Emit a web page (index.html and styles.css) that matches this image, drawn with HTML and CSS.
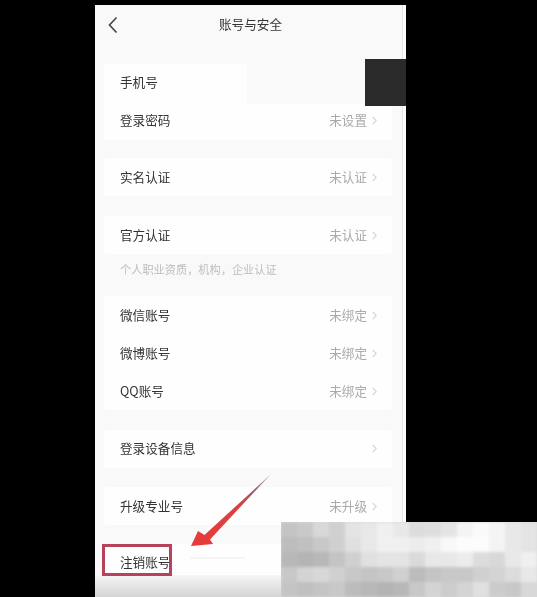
FILE: index.html
```html
<!DOCTYPE html>
<html>
<head>
    <meta charset="utf-8">
    <title>账号与安全</title>
    <link rel="stylesheet" href="styles.css">
</head>
<body>
    <div class="phone">
        <div class="header">
            <svg class="back" width="12" height="18" viewBox="0 0 12 18"><path d="M9.500 1.500L2.500 9l7 7.500" fill="none" stroke="#444" stroke-width="1.600"/></svg>
            <h1 class="title">账号与安全</h1>
        </div>

        <div class="card card-top">
            <div class="row"><span>手机号</span></div>
            <div class="row"><span>登录密码</span><span class="value">未设置<svg class="chevron" width="5" height="9" viewBox="0 0 5 9"><path d="M.7.8l3.500 3.700-3.500 3.700" fill="none" stroke="#d4d4d4" stroke-width="1.100"/></svg></span></div>
        </div>

        <div class="card">
            <div class="row"><span>实名认证</span><span class="value">未认证<svg class="chevron" width="5" height="9" viewBox="0 0 5 9"><path d="M.7.8l3.500 3.700-3.500 3.700" fill="none" stroke="#d4d4d4" stroke-width="1.100"/></svg></span></div>
        </div>

        <div class="card card-official">
            <div class="row"><span>官方认证</span><span class="value">未认证<svg class="chevron" width="5" height="9" viewBox="0 0 5 9"><path d="M.7.8l3.500 3.700-3.500 3.700" fill="none" stroke="#d4d4d4" stroke-width="1.100"/></svg></span></div>
        </div>
        <p class="hint">个人职业资质，机构，企业认证</p>

        <div class="card">
            <div class="row"><span>微信账号</span><span class="value">未绑定<svg class="chevron" width="5" height="9" viewBox="0 0 5 9"><path d="M.7.8l3.500 3.700-3.500 3.700" fill="none" stroke="#d4d4d4" stroke-width="1.100"/></svg></span></div>
            <div class="row"><span>微博账号</span><span class="value">未绑定<svg class="chevron" width="5" height="9" viewBox="0 0 5 9"><path d="M.7.8l3.500 3.700-3.500 3.700" fill="none" stroke="#d4d4d4" stroke-width="1.100"/></svg></span></div>
            <div class="row"><span>QQ账号</span><span class="value">未绑定<svg class="chevron" width="5" height="9" viewBox="0 0 5 9"><path d="M.7.8l3.500 3.700-3.500 3.700" fill="none" stroke="#d4d4d4" stroke-width="1.100"/></svg></span></div>
        </div>

        <div class="card card-device">
            <div class="row"><span>登录设备信息</span><span class="value"><svg class="chevron" width="5" height="9" viewBox="0 0 5 9"><path d="M.7.8l3.500 3.700-3.500 3.700" fill="none" stroke="#d4d4d4" stroke-width="1.100"/></svg></span></div>
        </div>

        <div class="card card-upgrade">
            <div class="row"><span>升级专业号</span><span class="value">未升级<svg class="chevron" width="5" height="9" viewBox="0 0 5 9"><path d="M.7.8l3.500 3.700-3.500 3.700" fill="none" stroke="#d4d4d4" stroke-width="1.100"/></svg></span></div>
        </div>

        <div class="card card-cancel">
            <div class="row"><span>注销账号</span></div>
        </div>

        <!-- things painted over the screenshot -->
        <div class="mask-light"></div>
        <div class="mask-dark"></div>
        <div class="bottom-shade"></div>
        <svg class="marks" width="311" height="592" viewBox="0 0 311 592">
            <defs>
                <linearGradient id="arrow-fill" gradientUnits="userSpaceOnUse" x1="96" y1="541" x2="176" y2="469">
                    <stop offset="0" stop-color="#e93a3a"/>
                    <stop offset="0.55" stop-color="#dc4040"/>
                    <stop offset="0.8" stop-color="#94606a"/>
                    <stop offset="1" stop-color="#b8b0b2"/>
                </linearGradient>
            </defs>
            <path d="M95 553h55" stroke="#ececec" stroke-width="1"/>
            <rect x="8.500" y="540.500" width="67" height="29" fill="none" stroke="#b5445a" stroke-width="3"/>
            <path d="M96 541L103 526L109.500 530L176 469L115 534.500L118 539Z" fill="url(#arrow-fill)"/>
        </svg>
    </div>

    <svg class="mosaic" width="256" height="75" viewBox="0 0 256 75">
        <rect width="256" height="75" fill="#d8d8d8"/>
        <g class="cells">
            <rect x="0" y="0" width="16" height="15" fill="#c4c4c4"/><rect x="16" y="0" width="16" height="15" fill="#c9c9c9"/><rect x="32" y="0" width="16" height="15" fill="#d8d8d8"/><rect x="48" y="0" width="16" height="15" fill="#d0d0d0"/><rect x="64" y="0" width="16" height="15" fill="#e4e4e4"/><rect x="80" y="0" width="16" height="15" fill="#e8e8e8"/><rect x="96" y="0" width="16" height="15" fill="#f0f0f0"/><rect x="112" y="0" width="16" height="15" fill="#e8e8e8"/>
            <rect x="128" y="0" width="16" height="15" fill="#dcdcdc"/><rect x="144" y="0" width="16" height="15" fill="#dedede"/><rect x="160" y="0" width="16" height="15" fill="#e4e4e4"/><rect x="176" y="0" width="16" height="15" fill="#f4f4f4"/><rect x="192" y="0" width="16" height="15" fill="#fafafa"/><rect x="208" y="0" width="16" height="15" fill="#f4f4f4"/><rect x="224" y="0" width="16" height="15" fill="#e8e8e8"/><rect x="240" y="0" width="16" height="15" fill="#e4e4e4"/>
            <rect x="0" y="15" width="16" height="15" fill="#bdbdbd"/><rect x="16" y="15" width="16" height="15" fill="#c0c0c0"/><rect x="32" y="15" width="16" height="15" fill="#c8c8c8"/><rect x="48" y="15" width="16" height="15" fill="#d0d0d0"/><rect x="64" y="15" width="16" height="15" fill="#e0e0e0"/><rect x="80" y="15" width="16" height="15" fill="#e8e8e8"/><rect x="96" y="15" width="16" height="15" fill="#f0f0f0"/><rect x="112" y="15" width="16" height="15" fill="#f0f0f0"/>
            <rect x="128" y="15" width="16" height="15" fill="#ececec"/><rect x="144" y="15" width="16" height="15" fill="#f0f0f0"/><rect x="160" y="15" width="16" height="15" fill="#f8f8f8"/><rect x="176" y="15" width="16" height="15" fill="#fcfcfc"/><rect x="192" y="15" width="16" height="15" fill="#fcfcfc"/><rect x="208" y="15" width="16" height="15" fill="#f4f4f4"/><rect x="224" y="15" width="16" height="15" fill="#e8e8e8"/><rect x="240" y="15" width="16" height="15" fill="#e4e4e4"/>
            <rect x="0" y="30" width="16" height="15" fill="#b8b8b8"/><rect x="16" y="30" width="16" height="15" fill="#b4b4b4"/><rect x="32" y="30" width="16" height="15" fill="#b8b8b8"/><rect x="48" y="30" width="16" height="15" fill="#c4c4c4"/><rect x="64" y="30" width="16" height="15" fill="#d0d0d0"/><rect x="80" y="30" width="16" height="15" fill="#e0e0e0"/><rect x="96" y="30" width="16" height="15" fill="#e4e4e4"/><rect x="112" y="30" width="16" height="15" fill="#e4e4e4"/>
            <rect x="128" y="30" width="16" height="15" fill="#dadada"/><rect x="144" y="30" width="16" height="15" fill="#e8e8e8"/><rect x="160" y="30" width="16" height="15" fill="#e8e8e8"/><rect x="176" y="30" width="16" height="15" fill="#ececec"/><rect x="192" y="30" width="16" height="15" fill="#dcdcdc"/><rect x="208" y="30" width="16" height="15" fill="#d8d8d8"/><rect x="224" y="30" width="16" height="15" fill="#e8e8e8"/><rect x="240" y="30" width="16" height="15" fill="#f0f0f0"/>
            <rect x="0" y="45" width="16" height="15" fill="#c8c8c8"/><rect x="16" y="45" width="16" height="15" fill="#d4d4d4"/><rect x="32" y="45" width="16" height="15" fill="#d8d8d8"/><rect x="48" y="45" width="16" height="15" fill="#d0d0d0"/><rect x="64" y="45" width="16" height="15" fill="#c8c8c8"/><rect x="80" y="45" width="16" height="15" fill="#c4c4c4"/><rect x="96" y="45" width="16" height="15" fill="#c8c8c8"/><rect x="112" y="45" width="16" height="15" fill="#d0d0d0"/>
            <rect x="128" y="45" width="16" height="15" fill="#bcbcbc"/><rect x="144" y="45" width="16" height="15" fill="#c4c4c4"/><rect x="160" y="45" width="16" height="15" fill="#c8c8c8"/><rect x="176" y="45" width="16" height="15" fill="#c8c8c8"/><rect x="192" y="45" width="16" height="15" fill="#d0d0d0"/><rect x="208" y="45" width="16" height="15" fill="#d4d4d4"/><rect x="224" y="45" width="16" height="15" fill="#dcdcdc"/><rect x="240" y="45" width="16" height="15" fill="#e8e8e8"/>
            <rect x="0" y="60" width="16" height="15" fill="#c4c4c4"/><rect x="16" y="60" width="16" height="15" fill="#c0c0c0"/><rect x="32" y="60" width="16" height="15" fill="#c4c4c4"/><rect x="48" y="60" width="16" height="15" fill="#c8c8c8"/><rect x="64" y="60" width="16" height="15" fill="#bcbcbc"/><rect x="80" y="60" width="16" height="15" fill="#b8b8b8"/><rect x="96" y="60" width="16" height="15" fill="#b4b4b4"/><rect x="112" y="60" width="16" height="15" fill="#b8b8b8"/>
            <rect x="128" y="60" width="16" height="15" fill="#c8c8c8"/><rect x="144" y="60" width="16" height="15" fill="#d4d4d4"/><rect x="160" y="60" width="16" height="15" fill="#cccccc"/><rect x="176" y="60" width="16" height="15" fill="#d4d4d4"/><rect x="192" y="60" width="16" height="15" fill="#e0e0e0"/><rect x="208" y="60" width="16" height="15" fill="#cccccc"/><rect x="224" y="60" width="16" height="15" fill="#c8c8c8"/><rect x="240" y="60" width="16" height="15" fill="#d8d8d8"/>
        </g>
    </svg>
</body>
</html>
```
FILE: styles.css
```css
html, body {
    margin: 0;
    height: 597px;
    overflow: hidden;
    background: #000;
}
body {
    position: relative;
    padding-top: 5px;
    box-sizing: border-box;
    font-family: "Noto Sans CJK SC", "Liberation Sans", sans-serif;
}
.phone {
    position: relative;
    width: 311px;
    height: 592px;
    margin-left: 95px;
    padding: 0 14px 0 9px;
    box-sizing: border-box;
    overflow: hidden;
    background: #f9f9f9;
    box-shadow: inset -3px 0 #fcfcfc, inset -4px 0 #e6e6e6;
    color: #333;
    font-size: 12.6px;
    filter: blur(0.4px);
}
.header {
    position: relative;
    height: 59px;
}
.back {
    position: absolute;
    left: 3px;
    top: 11px;
}
.title {
    margin: 0;
    padding: 9px 0 0 5px;
    line-height: 20px;
    font-size: 12.6px;
    font-weight: normal;
    text-align: center;
}
.card {
    background: #fefefe;
    border-radius: 4px;
    margin-bottom: 20px;
}
.card-top {
    margin-bottom: 18px;
}
.card-official {
    margin-bottom: 0;
}
.card-device,
.card-upgrade {
    margin-bottom: 19px;
}
.row {
    display: flex;
    justify-content: space-between;
    align-items: center;
    height: 38px;
    padding: 0 15px 1px 16px;
    box-sizing: border-box;
}
.card-top .row,
.card-device .row,
.card-cancel .row {
    padding-bottom: 3px;
}
.value {
    display: flex;
    align-items: center;
    color: #aaa;
}
.chevron {
    margin-left: 5px;
    position: relative;
    top: 1px;
}
.hint {
    margin: 0;
    height: 42px;
    padding: 6px 0 0 16px;
    box-sizing: border-box;
    line-height: 18px;
    font-size: 11.2px;
    color: #bdbdbd;
}
.mask-light {
    position: absolute;
    left: 152px;
    top: 57px;
    width: 118px;
    height: 42px;
    background: #f9f9f9;
}
.mask-dark {
    position: absolute;
    left: 270px;
    top: 54px;
    width: 41px;
    height: 47px;
    background: #2a2a2a;
    filter: blur(0.7px);
}
.bottom-shade {
    position: absolute;
    left: 0;
    right: 0;
    top: 570px;
    height: 22px;
    background: linear-gradient(#f6f6f6, #d4d4d4);
}
.marks {
    position: absolute;
    left: 0;
    top: 0;
}
.mosaic {
    position: absolute;
    left: 281px;
    top: 522px;
}
.cells {
    filter: blur(1.5px);
}
```
